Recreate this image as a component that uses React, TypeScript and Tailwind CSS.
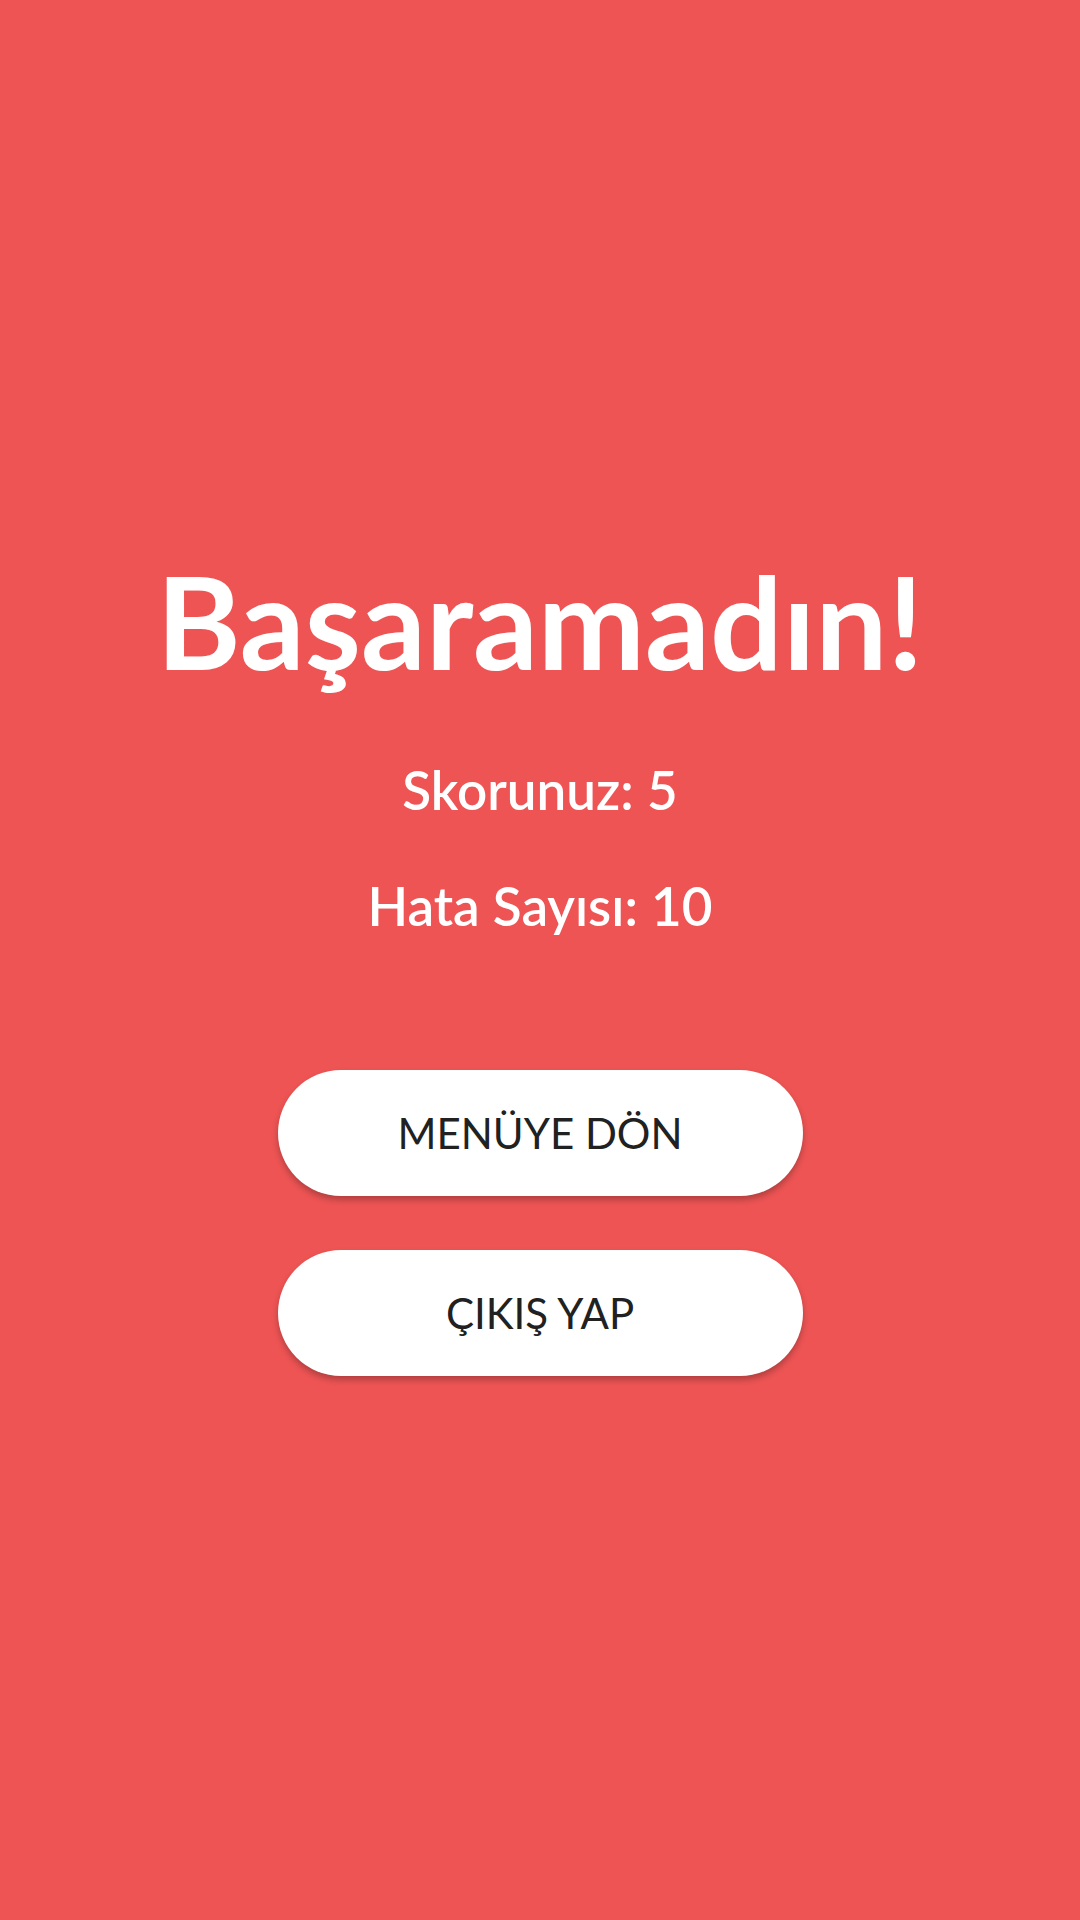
import React from 'react';

const GameOver = () => {
  const score = 5;
  const mistakes = 10;

  return (
    <div
      className="min-h-screen w-full bg-[#ee5454] flex flex-col items-center pt-[557px]"
      style={{ fontFamily: 'Lato, "Open Sans", sans-serif' }}
    >
      {/* Result title */}
      <h1 className="text-white font-bold text-[128px] leading-none">Başaramadın!</h1>

      {/* Stats */}
      <p className="mt-[78px] text-white font-semibold text-[53px] leading-none">Skorunuz: {score}</p>
      <p className="mt-[63px] text-white font-semibold text-[53px] leading-none">Hata Sayısı: {mistakes}</p>

      {/* Actions */}
      <button className="mt-[138px] w-[525px] h-[126px] rounded-full bg-white text-[#212121] text-[42px] shadow-[0_4px_6px_rgba(0,0,0,0.25)]">
        MENÜYE DÖN
      </button>
      <button className="mt-[54px] w-[525px] h-[126px] rounded-full bg-white text-[#212121] text-[42px] shadow-[0_4px_6px_rgba(0,0,0,0.25)]">
        ÇIKIŞ YAP
      </button>
    </div>
  );
};

export default GameOver;
